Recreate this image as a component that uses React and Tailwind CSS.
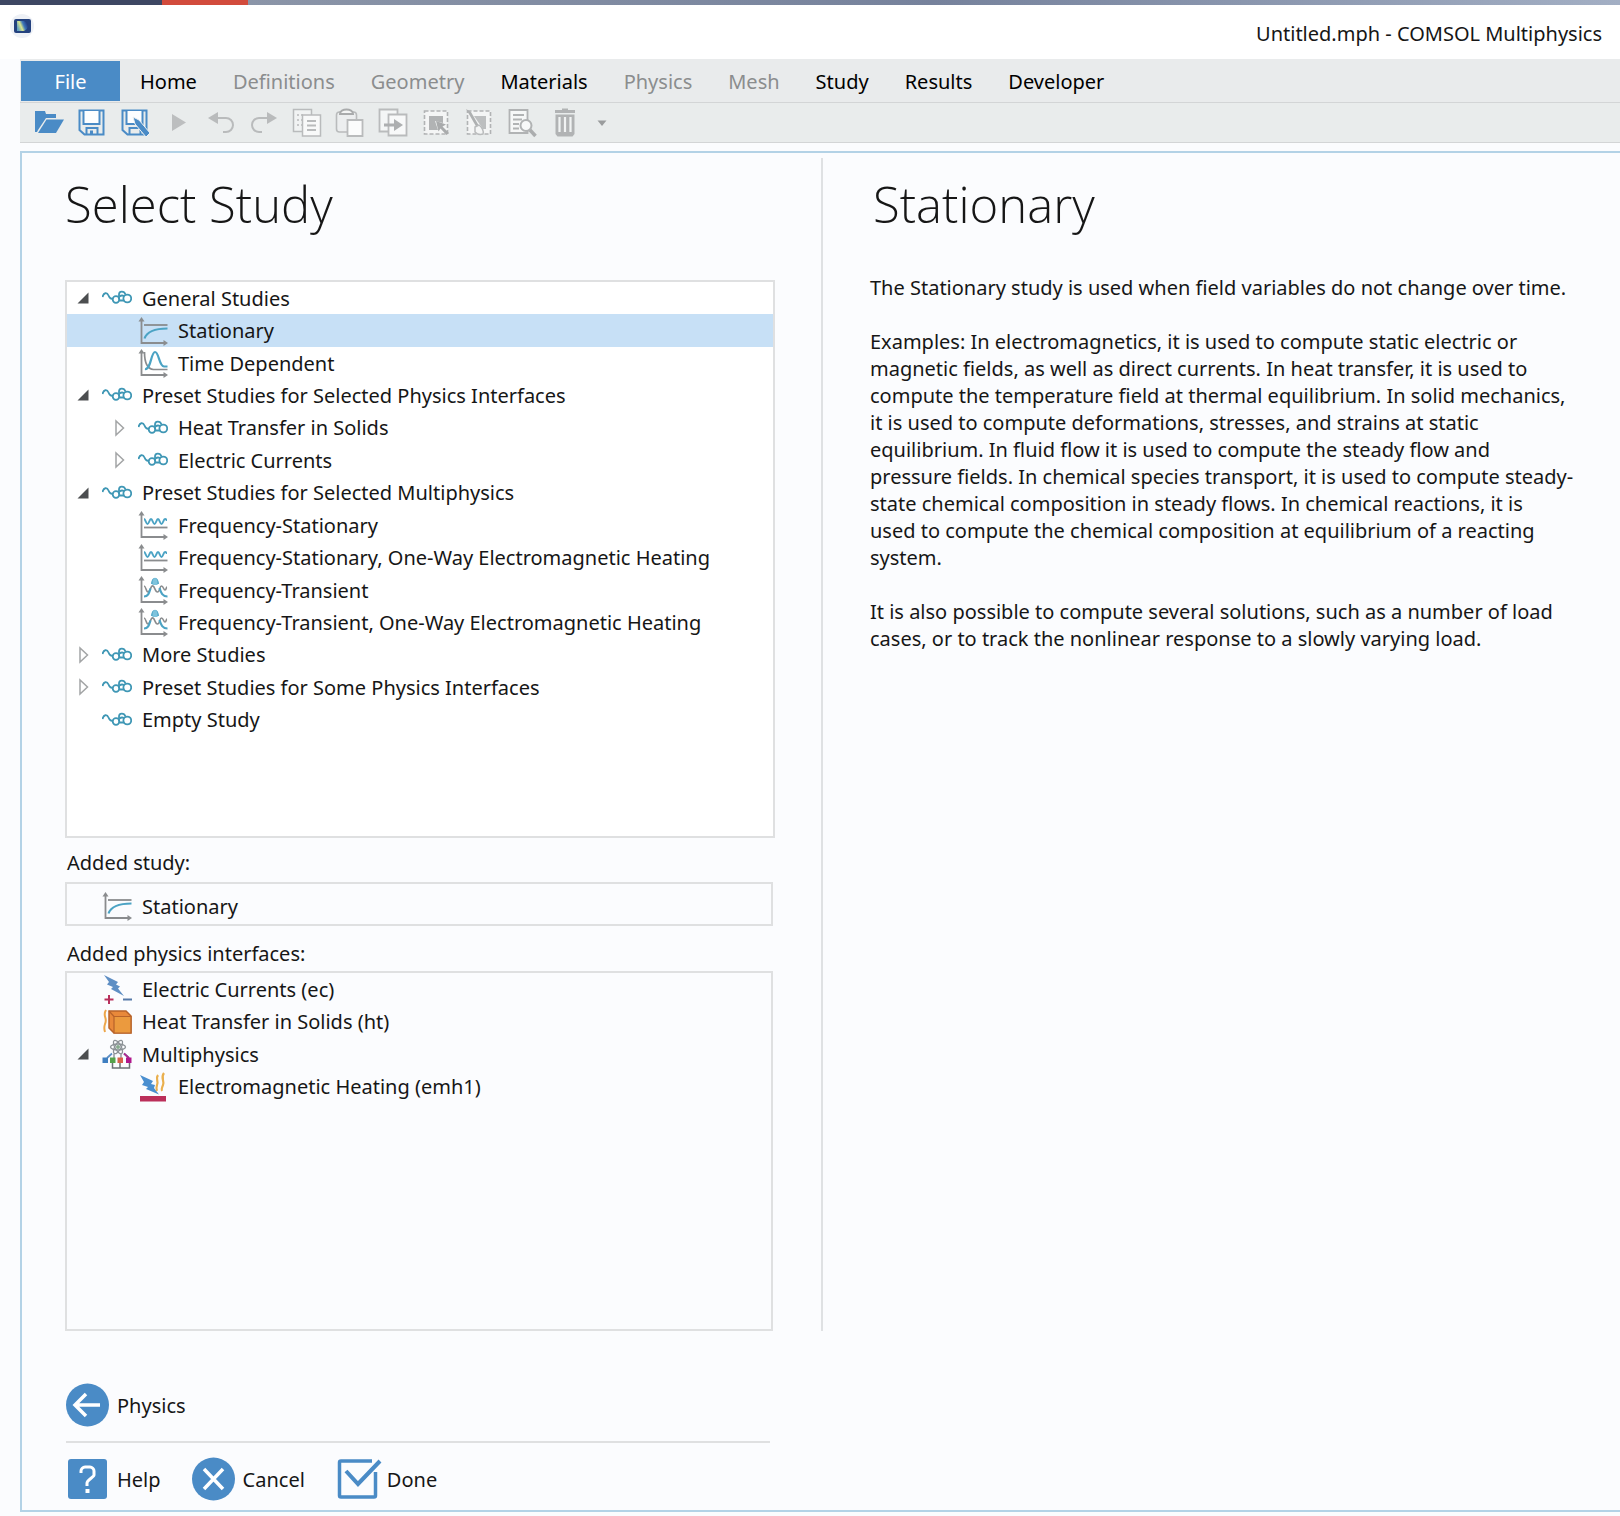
import React, { useState } from "react";

const BLUE = "#4a8bc6";
const TEAL = "#3f97b5";
const GREY = "#8a8c8e";
const MUTED = "#b9bbbc";

/* ---------- toolbar icons ---------- */

function ToolSvg({ children }) {
  return (
    <svg width="30" height="30" viewBox="0 0 30 30" fill="none" aria-hidden="true">
      {children}
    </svg>
  );
}

const OpenIcon = () => (
  <ToolSvg>
    <path d="M1 3h10l1 3h10v4H12L4 22l-1 2H1z" fill={BLUE} />
    <path d="M12.5 11.5H30L22 25H4z" fill={BLUE} />
  </ToolSvg>
);

const floppy = "M2.5 2.5H26.500V26.500H7.500L2.500 22z";

const SaveIcon = () => (
  <ToolSvg>
    <path d={floppy} stroke={BLUE} strokeWidth="2" />
    <path d="M6.500 3v13h16V3" stroke={BLUE} strokeWidth="2" fill="#fdfeff" />
    <path d="M9.500 26v-6h11v6" stroke={BLUE} strokeWidth="2" />
    <path d="M13 22.500h3V27h-3z" fill={BLUE} />
  </ToolSvg>
);

const SaveAsIcon = () => (
  <ToolSvg>
    <path d={floppy} stroke={BLUE} strokeWidth="2" />
    <path d="M6.500 3v13h16V3" stroke={BLUE} strokeWidth="2" fill="#fdfeff" />
    <path d="M9.500 26v-6h11v6" stroke={BLUE} strokeWidth="2" />
    <path d="M13 9l6 3 11 13-4 4L15 16z" fill={BLUE} stroke="#eef1f2" strokeWidth="1" />
  </ToolSvg>
);

const PlayIcon = () => (
  <ToolSvg>
    <path d="M9 6l14 8.500L9 23z" fill="#bcbebf" />
  </ToolSvg>
);

const UndoIcon = () => (
  <ToolSvg>
    <path d="M2 10l10-6v12z" fill={MUTED} />
    <path d="M11 10h9a6.500 6.500 0 0 1 0 14h-3" stroke={MUTED} strokeWidth="2" />
  </ToolSvg>
);

const RedoIcon = () => (
  <ToolSvg>
    <path d="M28 10L18 4v12z" fill={MUTED} />
    <path d="M19 10h-9a6.500 6.500 0 0 0 0 14h3" stroke={MUTED} strokeWidth="2" />
  </ToolSvg>
);

const CopyIcon = () => (
  <ToolSvg>
    <path d="M1.500 1.500h18v22h-18z" stroke={MUTED} strokeWidth="1.500" fill="#f1f3f3" />
    <path d="M5 7h2m2 0h2M5 12h2m2 0h1M5 17h2m2 0h1" stroke={MUTED} strokeWidth="1.500" />
    <path d="M10.500 7h18v21h-18z" stroke={MUTED} strokeWidth="1.500" fill="#f8f9f9" />
    <path d="M15 13h9M15 17.500h9M15 22h9" stroke={MUTED} strokeWidth="1.800" />
  </ToolSvg>
);

const PasteIcon = () => (
  <ToolSvg>
    <rect x="1.500" y="4" width="20" height="20" rx="3" stroke={MUTED} strokeWidth="1.600" fill="#eceeef" />
    <path d="M5 6c0-6 13-6 13 0z" stroke="#a9abac" strokeWidth="2" fill="#f4f5f5" />
    <path d="M12.500 12h15v16h-15z" stroke={MUTED} strokeWidth="1.800" fill="#fbfcfc" />
  </ToolSvg>
);

const DuplicateIcon = () => (
  <ToolSvg>
    <path d="M1.500 1.500h18v22h-18z" stroke={MUTED} strokeWidth="1.800" fill="#f4f6f6" />
    <path d="M10.500 6.500h18v21h-18z" stroke={MUTED} strokeWidth="1.800" fill="#f8f9f9" />
    <path d="M6 17h11" stroke="#adafb0" strokeWidth="3" />
    <path d="M16 11l9 6-9 6z" fill="#adafb0" />
  </ToolSvg>
);

const SelectIcon = () => (
  <ToolSvg>
    <path d="M3.500 3h23v23h-23z" stroke="#b1b3b4" strokeWidth="1.600" strokeDasharray="4 2" fill="#f4f5f5" />
    <path d="M8 8h14v7l-8-2 3 9H8z" fill="#b1b3b4" />
    <path d="M15 13l10 3.500-3.500 2L28 25l-2.500 2-6-6.500-2 3z" fill="#a9abac" />
  </ToolSvg>
);

const DeselectIcon = () => (
  <ToolSvg>
    <path d="M3.500 3h23v23h-23z" stroke="#b1b3b4" strokeWidth="1.600" strokeDasharray="4 2" fill="#f4f5f5" />
    <path d="M10 8h12v13h-3z" fill="#bdbfc0" />
    <path d="M2 1l5 3 8 14-2 2z" fill="#aeb0b1" />
    <path d="M11 19l4-2c3 2 5 6 4 9-3 1-6 0-8-2z" fill="#f4f5f5" stroke="#b9bbbc" strokeWidth="1.500" />
  </ToolSvg>
);

const FindIcon = () => (
  <ToolSvg>
    <path d="M2.500 2h18v23h-18z" stroke="#b1b3b4" strokeWidth="1.800" fill="#f6f7f7" />
    <path d="M6 7h11M6 11.500h9M6 16h6M6 20.500h6" stroke="#b1b3b4" strokeWidth="1.800" />
    <circle cx="19" cy="17.500" r="5.500" stroke="#b1b3b4" strokeWidth="2" fill="#f8f9f9" />
    <path d="M23 22l5.500 6" stroke="#abadae" strokeWidth="3.500" />
  </ToolSvg>
);

const TrashIcon = () => (
  <ToolSvg>
    <path d="M12 0.500h6V2h7v3H5V2h7z" fill="#b1b3b4" />
    <path d="M5.500 6.500h19V26l-2 2.500h-15l-2-2.500z" fill="#b1b3b4" />
    <path d="M9.500 9v15M15 9v15M20.500 9v15" stroke="#f1f3f3" strokeWidth="2.200" />
  </ToolSvg>
);

/* ---------- tree icons ---------- */

function TreeSvg({ children }) {
  return (
    <svg width="30" height="30" viewBox="0 0 30 30" fill="none" className="shrink-0" aria-hidden="true">
      {children}
    </svg>
  );
}

const StudyIcon = () => (
  <TreeSvg>
    <g stroke={TEAL} strokeWidth="1.800">
      <path d="M0.500 14C1.500 9.500 5 9 6.500 12.500C7.500 15 8.500 16.300 11 15.700" />
      <circle cx="14" cy="16.500" r="3.300" />
      <path d="M17 16.500V11.500C17 8 22 7.500 23.500 11.500" />
      <path d="M17.500 13.500c1.500-1.200 3-1.200 4.500-0.500M17.300 17.500h5" />
      <circle cx="25.300" cy="15.500" r="3.900" />
    </g>
  </TreeSvg>
);

const Axes = () => (
  <g>
    <path d="M3.500 3v24H27" stroke={GREY} strokeWidth="1.800" />
    <path d="M0.500 5.500l3-4.500 3 4.500z" fill={GREY} />
    <path d="M25.500 24l4.500 3-4.500 3z" fill={GREY} />
  </g>
);

const StationaryIcon = () => (
  <TreeSvg>
    <Axes />
    <path d="M6 9h23.500" stroke={GREY} strokeWidth="1.800" />
    <path d="M6.500 22.500C9 15.500 16 12.500 29.500 12.500" stroke="#4ba3c4" strokeWidth="2.200" />
  </TreeSvg>
);

const TimeIcon = () => (
  <TreeSvg>
    <Axes />
    <path d="M6.500 4c0 10 3 17 9 17.500h14" stroke={GREY} strokeWidth="1.700" />
    <path d="M7 21c6 1 6-17 10-17s4 14 9 14.500h3.500" stroke="#4ba3c4" strokeWidth="2.200" />
  </TreeSvg>
);

const FreqStationaryIcon = () => (
  <TreeSvg>
    <Axes />
    <path
      d="M6 9c1.500 0 2 5 3.500 5s2-5 3.500-5 2 5 3.500 5 2-5 3.500-5 2 5 3.500 5 2-5 3.500-5 1 1 2 1"
      stroke="#4ba3c4"
      strokeWidth="2"
    />
    <path d="M6 17.500h23.500" stroke={GREY} strokeWidth="1.800" />
  </TreeSvg>
);

const FreqTransientIcon = () => (
  <TreeSvg>
    <Axes />
    <path d="M6 11c2 0 2 6 4 6s3-7 5-6 2 6 4.500 6 2-6 4-6 2 4 3.500 4 1-3 2-3" stroke={GREY} strokeWidth="1.600" />
    <path d="M6 21.500c4 0 5-3 6.500-8M21.500 13c1.500 5 3 8.500 8 8.500M14 9c1-7 5-7 6 0" stroke="#4ba3c4" strokeWidth="2.200" />
    <path d="M14.500 6c1-4 4-4 5 0v4h-5z" fill="#7fc3dc" />
  </TreeSvg>
);

const ElectricIcon = () => (
  <TreeSvg>
    <path d="M2 1l14 7-2 2.500 4 2-2 2 6 7.500-13-7 2-2-6-2.500 2-2.500z" fill="#5f8fc4" />
    <path d="M2.500 25.500h9M7 21v9" stroke="#b8305c" strokeWidth="2" />
    <path d="M21 25.500h9" stroke="#5579a8" strokeWidth="2" />
  </TreeSvg>
);

const HeatIcon = () => (
  <TreeSvg>
    <path d="M4 3c-4 6 2 8-1 14-1 3-1 5 0 8" stroke="#eda64a" strokeWidth="2" />
    <path d="M7 4h17l5 5v17H12L7 21z" fill="#e9893a" stroke="#b8632a" strokeWidth="1.500" />
    <path d="M12 9.500h17V26H12z" fill="#eb9a3e" stroke="#b8632a" strokeWidth="1.200" />
    <path d="M7 4l5 5.500" stroke="#b8632a" strokeWidth="1.200" />
  </TreeSvg>
);

const MultiIcon = () => (
  <TreeSvg>
    <g stroke="#8c9296" strokeWidth="1.300">
      <ellipse cx="16" cy="8" rx="7.500" ry="3" />
      <ellipse cx="16" cy="8" rx="7.500" ry="3" transform="rotate(60 16 8)" />
      <ellipse cx="16" cy="8" rx="7.500" ry="3" transform="rotate(120 16 8)" />
    </g>
    <circle cx="16" cy="8" r="2" fill="#86a98d" />
    <path d="M5 19l5-4.500M27 19l-5-4.500" stroke="#5f8fc4" strokeWidth="1.800" />
    <path d="M22 14.500l5 4.500" stroke="#b02a8c" strokeWidth="1.800" />
    <path d="M12 15v4M19 15v4" stroke="#8c9296" strokeWidth="1.400" />
    <path d="M10.500 24v5h17V24M18 24v5" stroke="#6d7175" strokeWidth="1.500" />
    <path d="M0.500 18.500H6V24H0.500z" fill="#3f7fc1" />
    <path d="M8 18.500h5.500V24H8z" fill="#57a34c" />
    <path d="M15.500 18.500H21V24h-5.500z" fill="#d8604a" />
    <path d="M24 18.500h5.500V24H24z" fill="#b0188c" />
  </TreeSvg>
);

const EmHeatIcon = () => (
  <TreeSvg>
    <path d="M2 3l13 6-2 3 4 1-1 3 5 6.500-13-5.500 2-2-6-2 2-3z" fill="#4a8fd0" />
    <path d="M20 3c-3 4 1 6-1 10-1 3-1 4 0 6M26 1c-4 5 1 8-1 12-1 3-2 4-1 6" stroke="#eab04e" strokeWidth="2.200" />
    <path d="M2 24h26v5.500H2z" fill="#bb2f5a" />
  </TreeSvg>
);

const Expanded = () => (
  <svg width="12" height="12" viewBox="0 0 12 12" aria-hidden="true">
    <path d="M0.500 11.500h11v-11z" fill="#4c4e50" />
  </svg>
);

const Collapsed = () => (
  <svg width="12" height="18" viewBox="0 0 12 18" aria-hidden="true">
    <path d="M3 2v14l7.500-7z" fill="#fff" stroke="#a3a5a6" strokeWidth="1.500" />
  </svg>
);

/* ---------- data ---------- */

const tabs = [
  ["Home", true],
  ["Definitions", false],
  ["Geometry", false],
  ["Materials", true],
  ["Physics", false],
  ["Mesh", false],
  ["Study", true],
  ["Results", true],
  ["Developer", true],
];

const tools = [
  ["Open", OpenIcon],
  ["Save", SaveIcon],
  ["Save as", SaveAsIcon],
  ["Run", PlayIcon],
  ["Undo", UndoIcon],
  ["Redo", RedoIcon],
  ["Copy", CopyIcon],
  ["Paste", PasteIcon],
  ["Duplicate", DuplicateIcon],
  ["Select", SelectIcon],
  ["Deselect", DeselectIcon],
  ["Find", FindIcon],
  ["Delete", TrashIcon],
];

const studies = [
  { label: "General Studies", icon: StudyIcon, open: true },
  { label: "Stationary", icon: StationaryIcon, level: 1 },
  { label: "Time Dependent", icon: TimeIcon, level: 1 },
  { label: "Preset Studies for Selected Physics Interfaces", icon: StudyIcon, open: true },
  { label: "Heat Transfer in Solids", icon: StudyIcon, level: 1, open: false },
  { label: "Electric Currents", icon: StudyIcon, level: 1, open: false },
  { label: "Preset Studies for Selected Multiphysics", icon: StudyIcon, open: true },
  { label: "Frequency-Stationary", icon: FreqStationaryIcon, level: 1 },
  { label: "Frequency-Stationary, One-Way Electromagnetic Heating", icon: FreqStationaryIcon, level: 1 },
  { label: "Frequency-Transient", icon: FreqTransientIcon, level: 1 },
  { label: "Frequency-Transient, One-Way Electromagnetic Heating", icon: FreqTransientIcon, level: 1 },
  { label: "More Studies", icon: StudyIcon, open: false },
  { label: "Preset Studies for Some Physics Interfaces", icon: StudyIcon, open: false },
  { label: "Empty Study", icon: StudyIcon },
];

const physics = [
  { label: "Electric Currents (ec)", icon: ElectricIcon },
  { label: "Heat Transfer in Solids (ht)", icon: HeatIcon },
  { label: "Multiphysics", icon: MultiIcon, open: true },
  { label: "Electromagnetic Heating (emh1)", icon: EmHeatIcon, level: 1 },
];

/* ---------- parts ---------- */

function TreeRow({ item, selected, onSelect }) {
  const Icon = item.icon;
  return (
    <li role="treeitem" aria-selected={selected} aria-expanded={item.open} className="flex">
      <button
        type="button"
        onClick={onSelect}
        className={
          "flex w-full items-center whitespace-nowrap text-left " +
          (item.level ? "pl-[46px] " : "pl-[10px] ") +
          (selected ? "bg-[#c7e0f6]" : "")
        }
      >
        <span className="w-[25px] shrink-0">
          {item.open === true && <Expanded />}
          {item.open === false && <Collapsed />}
        </span>
        <Icon />
        <span className="pl-[10px]">{item.label}</span>
      </button>
    </li>
  );
}

export default function App() {
  const [selected, setSelected] = useState("Stationary");

  return (
    <div className="flex min-h-screen flex-col bg-[#fbfcfe] font-['Noto_Sans','Open_Sans',sans-serif] text-[20px] leading-[27px] text-[#161616]">
      <div className="flex h-[5px]">
        <div className="w-[10%] bg-[#3d4763]" />
        <div className="w-[86px] bg-[#d24b3c]" />
        <div className="flex-1 bg-linear-to-r from-[#8b95a8] via-[#76829c] to-[#a3afc4]" />
      </div>

      <header className="flex h-[54px] items-start justify-between bg-white pt-2 pr-[18px] pl-2">
        <svg width="28" height="28" viewBox="0 0 28 28" aria-hidden="true">
          <defs>
            <linearGradient id="appGlow" x1="0" y1="0.600" x2="1" y2="0.200">
              <stop offset="0" stopColor="#5f9fc0" />
              <stop offset="0.350" stopColor="#d9e58c" />
              <stop offset="0.600" stopColor="#3f78b8" />
              <stop offset="1" stopColor="#1c2f7c" />
            </linearGradient>
          </defs>
          <circle cx="14" cy="13" r="12" fill="#eef1f6" />
          <rect x="6" y="6" width="17" height="14" rx="2" fill="#24427f" />
          <path d="M9 8h7c5 2 5 8 0 10H9z" fill="url(#appGlow)" />
        </svg>
        <h1 className="pt-[7px]">Untitled.mph - COMSOL Multiphysics</h1>
      </header>

      <div className="ml-5">
        <nav className="flex h-[44px] items-center border-b border-[#d3d5d6] bg-[#e9ebec] pt-px pl-px">
          <button type="button" className="h-10 w-[99px] bg-[#4a8bc6] pt-px text-white">
            File
          </button>
          <div className="flex pt-px pl-[2px]">
            {tabs.map(([name, enabled]) => (
              <button
                key={name}
                type="button"
                disabled={!enabled}
                className={"px-[18px] " + (enabled ? "text-black" : "text-[#8b8d8e]")}
              >
                {name}
              </button>
            ))}
          </div>
        </nav>
        <div role="toolbar" aria-label="Quick access" className="flex h-10 items-center border-b border-[#d3d5d6] bg-[#e9ecec] pt-px pl-[7px]">
          {tools.map(([name, Icon]) => (
            <button key={name} type="button" aria-label={name} className="flex w-[43px] justify-center">
              <Icon />
            </button>
          ))}
          <button type="button" aria-label="Customize toolbar" className="pl-[11px]">
            <svg width="10" height="6" viewBox="0 0 10 6" aria-hidden="true">
              <path d="M0.500 0.500h9L5 6z" fill="#9a9c9d" />
            </svg>
          </button>
        </div>
      </div>

      <main className="mt-2 mb-1 ml-5 flex flex-1 flex-col border-y-2 border-l-2 border-[#b3d2e6]">
        <div className="grid flex-1 grid-cols-2 pt-[5px]">
          <section aria-labelledby="select-title" className="flex flex-col pr-[46px] pl-[43px]">
            <h2 id="select-title" className="pt-3 font-['Open_Sans','Noto_Sans',sans-serif] text-[49px] leading-[68px] font-light">
              Select Study
            </h2>
            <div className="mt-[42px] h-[558px] border-2 border-[#dfe0e1] bg-white">
              <ul role="tree" aria-label="Studies" className="grid h-[454px] auto-rows-fr">
                {studies.map((item) => (
                  <TreeRow
                    key={item.label}
                    item={item}
                    selected={item.label === selected}
                    onSelect={() => setSelected(item.label)}
                  />
                ))}
              </ul>
            </div>
            <div className="mr-[2px] flex flex-1 flex-col">
              <h3 className="pt-[11px] pb-[6px] pl-[2px]">Added study:</h3>
              <div className="flex h-11 items-end border-2 border-[#dfe0e1]">
                <div className="flex h-9 items-center pl-[35px]">
                  <StationaryIcon />
                  <span className="pl-[10px]">Stationary</span>
                </div>
              </div>
              <h3 className="pt-[14px] pb-1 pl-[2px]">Added physics interfaces:</h3>
              <div className="flex-1 border-2 border-[#dfe0e1]">
                <ul role="tree" aria-label="Added physics interfaces" className="grid h-[130px] auto-rows-fr">
                  {physics.map((item) => (
                    <TreeRow
                      key={item.label}
                      item={item}
                      selected={item.label === selected}
                      onSelect={() => setSelected(item.label)}
                    />
                  ))}
                </ul>
              </div>
            </div>
          </section>

          <article aria-labelledby="detail-title" className="border-l-2 border-[#dfe1e3] pr-9 pl-[47px]">
            <h2 id="detail-title" className="pt-3 pl-[3px] font-['Open_Sans','Noto_Sans',sans-serif] text-[49px] leading-[68px] font-light">
              Stationary
            </h2>
            <div className="flex flex-col gap-[27px] pt-9">
              <p>The Stationary study is used when field variables do not change over time.</p>
              <p>
                Examples: In electromagnetics, it is used to compute static electric or
                <br />
                magnetic fields, as well as direct currents. In heat transfer, it is used to
                <br />
                compute the temperature field at thermal equilibrium. In solid mechanics,
                <br />
                it is used to compute deformations, stresses, and strains at static
                <br />
                equilibrium. In fluid flow it is used to compute the steady flow and
                <br />
                pressure fields. In chemical species transport, it is used to compute steady-
                <br />
                state chemical composition in steady flows. In chemical reactions, it is
                <br />
                used to compute the chemical composition at equilibrium of a reacting
                <br />
                system.
              </p>
              <p>
                It is also possible to compute several solutions, such as a number of load
                <br />
                cases, or to track the nonlinear response to a slowly varying load.
              </p>
            </div>
          </article>
        </div>

        <footer className="w-1/2 pt-[52px] pr-[51px] pb-[9px] pl-[44px]">
          <button type="button" className="flex items-center gap-2">
            <svg width="43" height="44" viewBox="0 0 43 44" fill="none" aria-hidden="true">
              <circle cx="21.500" cy="22" r="21.500" fill={BLUE} />
              <path d="M34 22H10M20 11L9 22l11 11" stroke="#fff" strokeWidth="3.500" />
            </svg>
            Physics
          </button>
          <div className="mt-[14px] border-t-2 border-[#dfe0e1] pt-[14px]">
            <div className="flex gap-[31px]">
              <button type="button" className="flex items-center gap-2">
                <svg width="43" height="44" viewBox="0 0 43 44" fill="none" aria-hidden="true">
                  <rect x="2" y="2" width="39" height="40" rx="3" fill={BLUE} />
                  <path d="M15 16v-2c0-2 2-4 4-4h5c2 0 4 2 4 4v4c0 2-7 5-7 8v3" stroke="#fff" strokeWidth="3" />
                  <path d="M19.500 32h4v4h-4z" fill="#fff" />
                </svg>
                Help
              </button>
              <button type="button" className="flex items-center gap-2">
                <svg width="43" height="44" viewBox="0 0 43 44" fill="none" aria-hidden="true">
                  <circle cx="21.500" cy="22" r="21.500" fill={BLUE} />
                  <path d="M12 12l19 20M31 12L12 32" stroke="#fff" strokeWidth="3.500" />
                </svg>
                Cancel
              </button>
              <button type="button" className="flex items-center gap-[5px]">
                <svg width="46" height="44" viewBox="0 0 46 44" fill="none" aria-hidden="true">
                  <path d="M36 4H5Q3.500 4 3.500 5.500V38.500Q3.500 40 5 40H38Q39.500 40 39.500 38.500V15" stroke={BLUE} strokeWidth="3.500" />
                  <path d="M10 14l12 13L44 4" stroke={BLUE} strokeWidth="4" />
                </svg>
                Done
              </button>
            </div>
          </div>
        </footer>
      </main>
    </div>
  );
}
